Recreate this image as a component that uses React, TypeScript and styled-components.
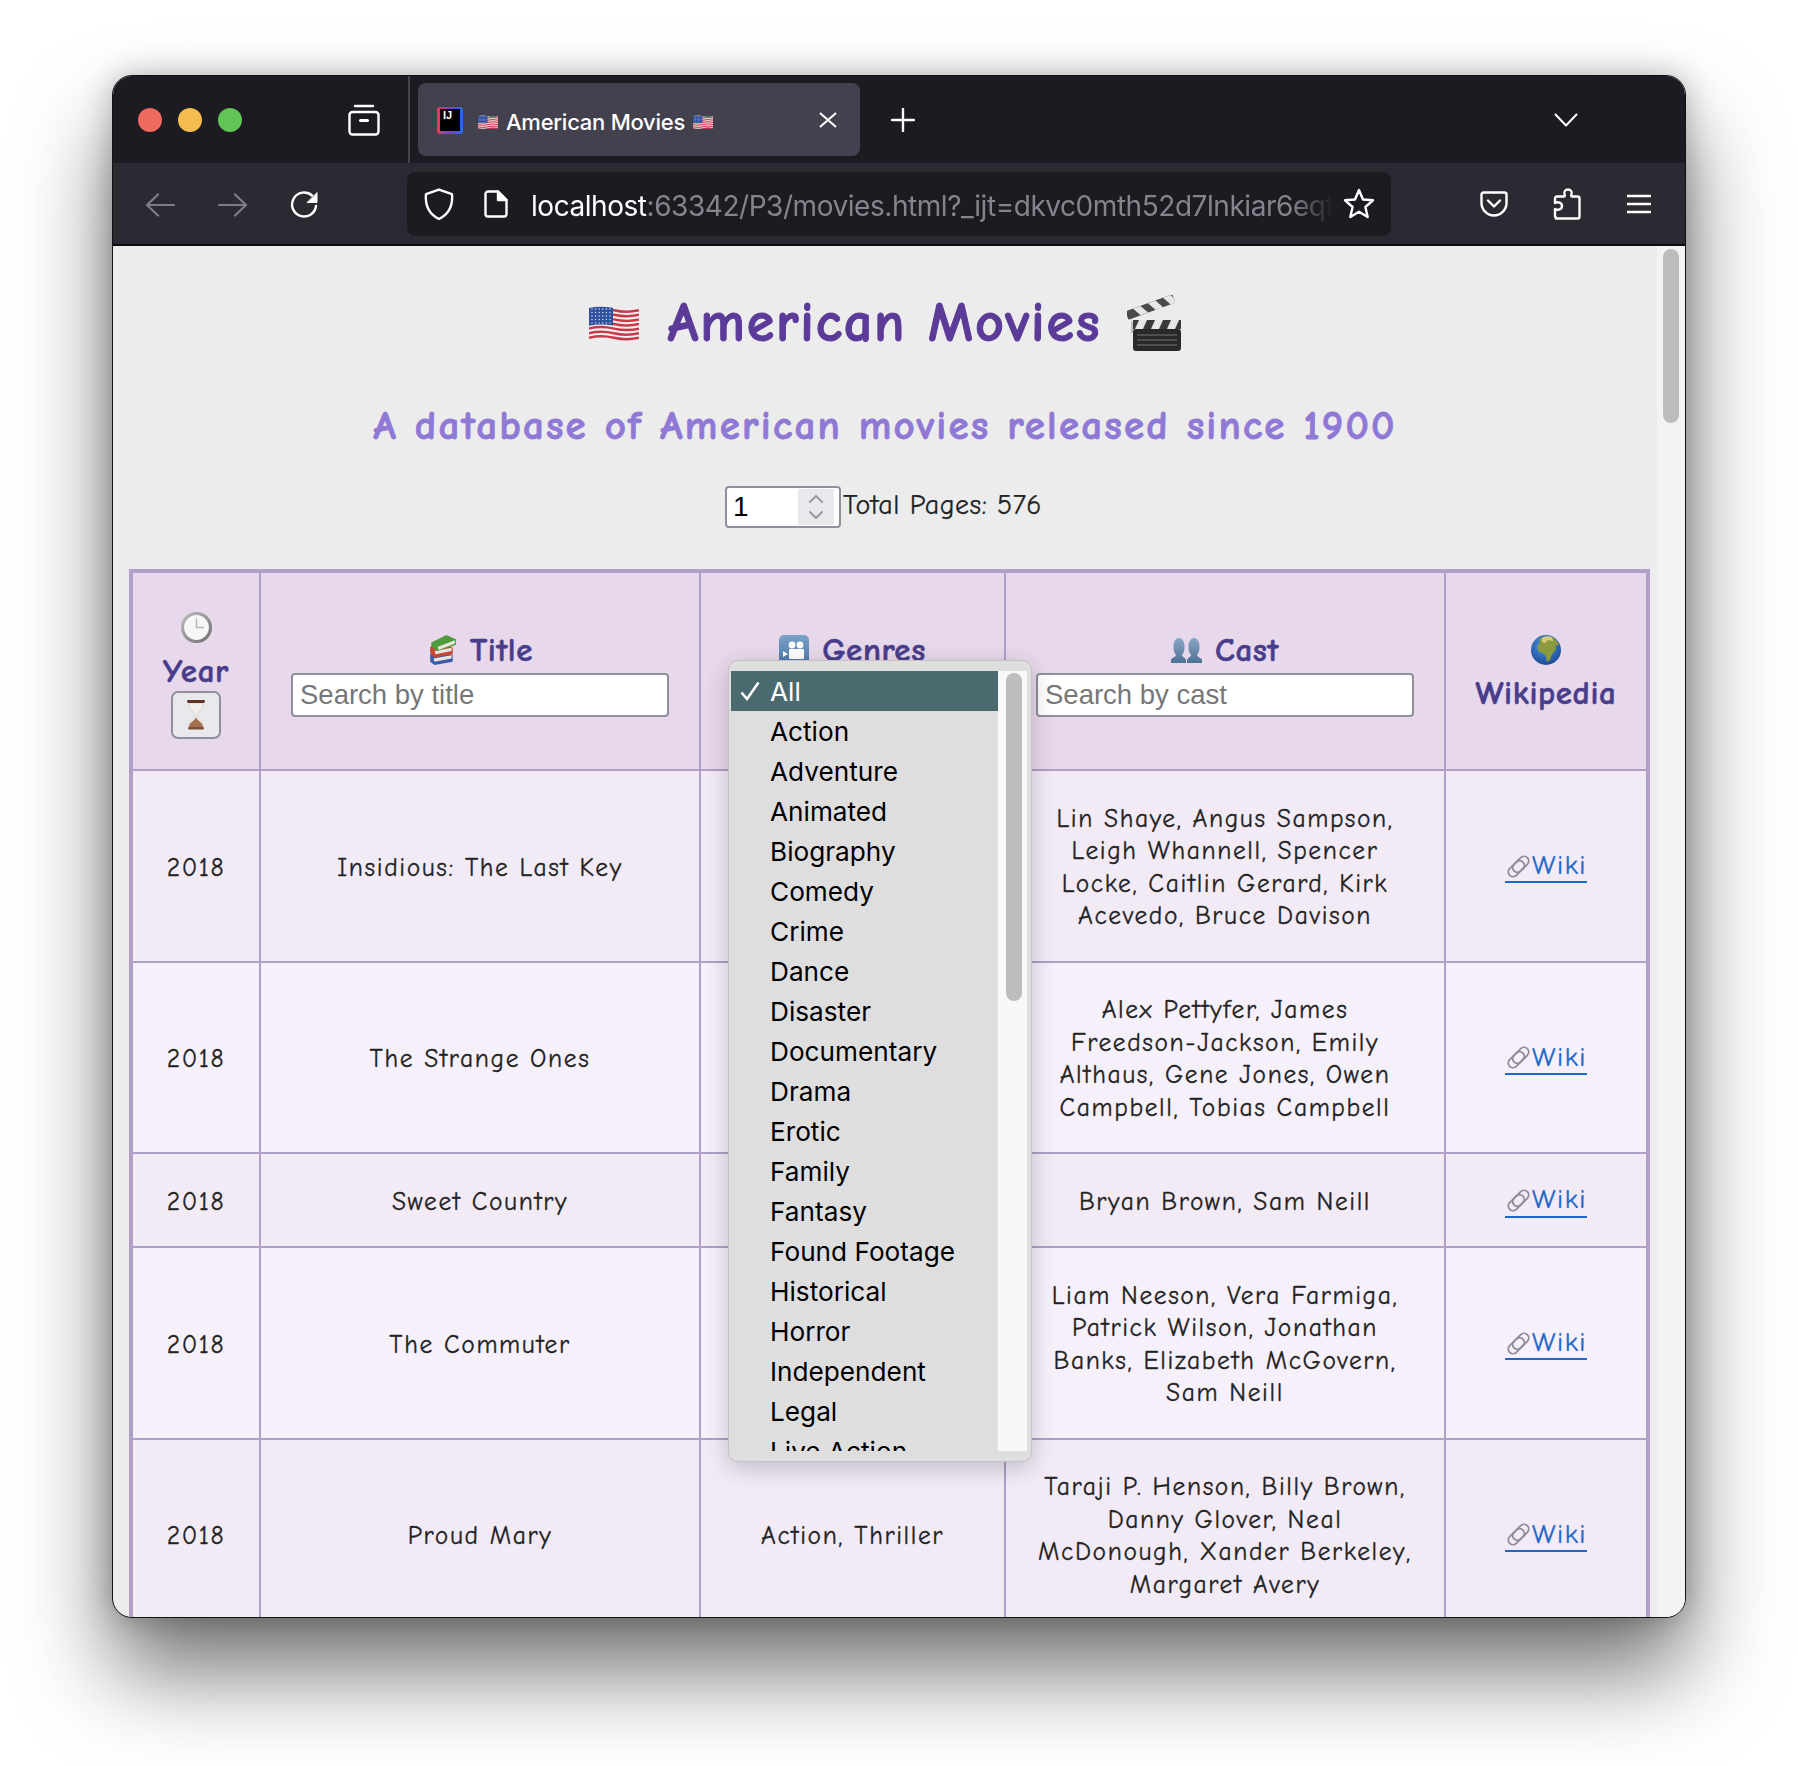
import React from 'react';
import styled, { createGlobalStyle } from 'styled-components';

const GlobalStyle = createGlobalStyle`
  html, body { margin: 0; padding: 0; background: #fff; }
  body { width: 1798px; height: 1766px; overflow: hidden; }
`;

const comic = `"Comic Sans MS", "Comic Neue", "Noto Sans", sans-serif`;
const ui = `Inter, "Liberation Sans", sans-serif`;
const helvetica = `"Liberation Sans", Arial, sans-serif`;

const Page = styled.div`
  padding: 75px 112px 0;
`;

const Window = styled.div`
  width: 1574px;
  height: 1543px;
  display: flex;
  flex-direction: column;
  box-sizing: border-box;
  border-radius: 20px;
  border: 1px solid #111;
  overflow: hidden;
  box-shadow: 0 54px 90px rgba(0, 0, 0, 0.55), 0 0 30px rgba(0, 0, 0, 0.25);
  background: #ececec;
`;

const TitleBar = styled.div`
  height: 87px;
  flex: none;
  display: flex;
  align-items: center;
  background: #1c1b22;
  color: #fff;
`;

const Lights = styled.div`
  display: flex;
  gap: 16px;
  margin-left: 25px;
`;

const Light = styled.span<{ $color: string }>`
  width: 24px;
  height: 24px;
  border-radius: 50%;
  background: ${p => p.$color};
`;

const TabsButton = styled.span`
  display: flex;
  margin-left: 106px;
`;

const BarDivider = styled.span`
  width: 2px;
  align-self: stretch;
  background: #45444d;
  margin-left: 28px;
`;

const Tab = styled.div`
  width: 442px;
  height: 73px;
  margin-left: 8px;
  border-radius: 8px;
  background: #42414d;
  display: flex;
  align-items: center;
  box-sizing: border-box;
  padding: 5px 0 0 19px;
  font: 500 22px ${ui};
`;

const TabTitle = styled.span`
  margin: 0 8px;
  letter-spacing: -0.25px;
`;

const Favicon = styled.span`
  width: 26px;
  height: 27px;
  margin-right: 15px;
  margin-top: -4px;
  border-radius: 3px;
  background: linear-gradient(90deg, #f0394f 0%, #7c3bd6 50%, #1f6fe8 100%);
  display: flex;
  align-items: center;
  justify-content: center;
`;

const FaviconInner = styled.span`
  width: 20px;
  height: 22px;
  background: #000;
  color: #fff;
  font: 700 11px/12px ${helvetica};
  padding-left: 3px;
  box-sizing: border-box;
`;

const CloseTab = styled.span`
  display: flex;
  margin-left: auto;
  margin-right: 23px;
  margin-top: -5px;
`;

const NewTab = styled.span`
  display: flex;
  margin-left: 31px;
`;

const Chevron = styled.span`
  display: flex;
  margin-left: auto;
  margin-right: 107px;
`;

const Toolbar = styled.div`
  height: 83px;
  flex: none;
  display: flex;
  align-items: center;
  background: #2b2a33;
  border-bottom: 2px solid #0c0c0d;
  box-sizing: border-box;
`;

const ToolIcon = styled.span<{ $left: number; $top?: number }>`
  display: flex;
  margin-left: ${p => p.$left}px;
  margin-top: ${p => p.$top ?? 0}px;
`;

const UrlBar = styled.div`
  width: 984px;
  height: 64px;
  margin-left: 89px;
  display: flex;
  align-items: center;
  box-sizing: border-box;
  padding: 0 16px 0 17px;
  border-radius: 8px;
  background: #1c1b22;
`;

const UrlText = styled.div`
  width: 803px;
  margin-left: 23px;
  margin-right: 10px;
  padding-top: 4px;
  overflow: hidden;
  white-space: nowrap;
  font: 400 28px ${ui};
  letter-spacing: -0.45px;
  color: #fff;
  -webkit-mask-image: linear-gradient(to right, #000 95%, transparent 100%);
  mask-image: linear-gradient(to right, #000 95%, transparent 100%);
`;

const UrlRest = styled.span`
  color: #85848d;
`;

const Content = styled.div`
  flex: 1;
  min-height: 0;
  display: flex;
`;

const Main = styled.main`
  flex: 1;
  min-width: 0;
  overflow: hidden;
  font-family: ${comic};
`;

const ScrollTrack = styled.div`
  width: 28px;
  flex: none;
  background: #f3f3f3;
  padding: 3px 6px;
  box-sizing: border-box;
`;

const ScrollThumb = styled.div`
  height: 174px;
  border-radius: 8px;
  background: #bcbcbc;
`;

const Heading = styled.h1`
  margin: 45px 0 0;
  display: flex;
  justify-content: center;
  align-items: center;
  gap: 26px;
  height: 64px;
  font: 700 56px/64px ${comic};
  letter-spacing: 1.8px;
  -webkit-text-stroke: 1px #5b3a98;
  color: #5b3a98;
`;

const HeadingText = styled.span`
  margin-left: 3px;
`;

const Subheading = styled.h2`
  margin: 45px 0 0;
  height: 52px;
  text-align: center;
  font: 700 41px/52px ${comic};
  letter-spacing: 2.2px;
  -webkit-text-stroke: 0.8px #8f78d6;
  color: #8f78d6;
`;

const Pager = styled.div`
  margin: 34px 0 0;
  height: 42px;
  display: flex;
  justify-content: center;
  align-items: center;
  gap: 2px;
  font-size: 28px;
  color: #222;
  -webkit-text-stroke: 0.25px #222;
`;

const PageNumber = styled.div`
  width: 116px;
  height: 42px;
  margin-left: -3px;
  box-sizing: border-box;
  border: 2px solid #8f8f9d;
  border-radius: 4px;
  background: #fff;
  display: flex;
  align-items: center;
  justify-content: space-between;
  padding: 1px 5px 1px 6px;
  font: 400 28px ${helvetica};
  color: #000;
  -webkit-text-stroke: 0;
`;

const Spinner = styled.span`
  width: 36px;
  height: 100%;
  background: #e9e9ed;
  display: flex;
  align-items: center;
  justify-content: center;
`;

const PagerLabel = styled.span`
  margin-top: -4px;
  letter-spacing: 0.5px;
`;

const Table = styled.table`
  margin: 41px 0 0 16px;
  width: 1521px;
  table-layout: fixed;
  border-collapse: collapse;
  border: 4px solid #b09fc6;
  color: #222;
`;

const HeadCell = styled.th`
  height: 194px;
  padding: 2px 0 0;
  border: 2px solid #b09fc6;
  background: #e8d8eb;
  color: #483d8b;
  font: 700 33px/38px ${comic};
  letter-spacing: 0.6px;
  -webkit-text-stroke: 0.5px #483d8b;
  text-align: center;
  vertical-align: middle;
  position: relative;
`;

const HeadLabel = styled.div`
  display: flex;
  justify-content: center;
  align-items: center;
  gap: 13px;
  height: 46px;
`;

const StackedLabel = styled.div<{ $shift: number }>`
  display: flex;
  flex-direction: column;
  align-items: center;
  gap: 6px;
  padding-top: ${p => p.$shift}px;
  line-height: 44px;
`;

const StackedText = styled.span`
  margin-bottom: -8px;
`;

const SearchInput = styled.input`
  display: block;
  width: 378px;
  height: 44px;
  margin: 0 auto;
  box-sizing: border-box;
  border: 2px solid #8f8f9d;
  border-radius: 4px;
  background: #fff;
  padding: 0 7px;
  font: 400 27.5px ${helvetica};
  letter-spacing: 0;
  -webkit-text-stroke: 0;
  &::placeholder {
    color: #777;
    opacity: 1;
  }
`;

const SelectSpace = styled.div`
  height: 44px;
`;

const SortButton = styled.button`
  width: 50px;
  height: 48px;
  padding: 0;
  box-sizing: border-box;
  border: 2px solid #8f8f9d;
  border-radius: 7px;
  background: #e9e9ed;
  display: flex;
  align-items: center;
  justify-content: center;
`;

const Row = styled.tr<{ $light?: boolean }>`
  background: ${p => (p.$light ? '#f6f0fa' : '#f2eaf5')};
`;

const Cell = styled.td<{ $tall?: boolean }>`
  height: ${p => (p.$tall ? 185.5 : 88)}px;
  padding: 4px 0 0;
  border: 2px solid #b09fc6;
  text-align: center;
  vertical-align: middle;
  font: 400 25.5px/32.5px ${comic};
  letter-spacing: 1.6px;
  -webkit-text-stroke: 0.3px #222;
  color: #222;
`;

const CastLine = styled.div`
  white-space: nowrap;
`;

const WikiLink = styled.a`
  display: inline-flex;
  align-items: center;
  height: 30px;
  margin-top: 4px;
  color: #1f67c9;
  text-decoration: none;
  -webkit-text-stroke: 0.3px #1f67c9;
  border-bottom: 2px solid #1f67c9;
  font-size: 27px;
`;

const Dropdown = styled.div`
  position: absolute;
  left: 27px;
  top: 87px;
  z-index: 5;
  width: 304px;
  height: 802px;
  box-sizing: border-box;
  display: flex;
  padding: 10px 4px 10px 2px;
  border-radius: 10px;
  border: 1px solid #c4c0c6;
  background: #dedede;
  box-shadow: 0 6px 24px rgba(0, 0, 0, 0.2);
  -webkit-text-stroke: 0;
`;

const DropdownList = styled.div`
  flex: 1;
  min-width: 0;
  overflow: hidden;
`;

const DropdownItem = styled.div<{ $selected?: boolean }>`
  height: 40px;
  flex: none;
  display: flex;
  align-items: center;
  padding-left: 39px;
  position: relative;
  font: 400 26.2px ${ui};
  letter-spacing: 0;
  color: ${p => (p.$selected ? '#fff' : '#000')};
  background: ${p => (p.$selected ? '#4b6a70' : 'transparent')};
`;

const CheckMark = styled.span`
  position: absolute;
  left: 9px;
  top: 10px;
  display: flex;
`;

const DropdownTrack = styled.div`
  width: 29px;
  flex: none;
  background: #f8f8f8;
  padding: 2px 5px 0 8px;
  box-sizing: border-box;
`;

const DropdownThumb = styled.div`
  height: 328px;
  border-radius: 8px;
  background: #bdbdbd;
`;

const Flag = ({ w }: { w: number }) => {
  const stripes = [0, 1, 2, 3, 4, 5, 6];
  const dots: [number, number][] = [];
  for (let r = 0; r < 5; r++) for (let c = 0; c < 6; c++) dots.push([3 + c * 3.6, 4 + r * 3.5]);
  return (
    <svg width={w} height={(w * 36) / 50} viewBox="0 0 50 36">
      <path d="M0 3Q12 0 25 3T50 3V33Q38 30 25 33T0 33Z" fill="#f4f1f1" />
      {stripes.map(i => (
        <path
          key={i}
          d={`M0 ${5.2 + i * 4.6}Q12 ${2.2 + i * 4.6} 25 ${5.2 + i * 4.6}T50 ${5.2 + i * 4.6}`}
          fill="none"
          stroke="#c8394a"
          strokeWidth="2.5"
        />
      ))}
      <path d="M0 3Q11 0.6 24 2.8V20.5Q11 18.5 0 20.8Z" fill="#2f4f9f" />
      {dots.map(([x, y]) => (
        <circle key={`${x}-${y}`} cx={x} cy={y} r="0.7" fill="#dfe6f5" />
      ))}
    </svg>
  );
};

const Clapper = () => (
  <svg width="54" height="56" viewBox="0 0 54 56">
    <g transform="rotate(-20 4 26)">
      <rect x="2" y="15" width="50" height="9" rx="1" fill="#4a4a4c" />
      <path d="M10 15h8l5 9h-8zM26 15h8l5 9h-8zM42 15h8l2 4v5h-5z" fill="#e6e6e6" />
    </g>
    <path d="M4 25l8 13h-8z" fill="#bdbdbd" />
    <rect x="6" y="25" width="48" height="9" fill="#3a3a3c" />
    <path d="M12 25h8l-4 9h-8zM28 25h8l-4 9h-8zM44 25h8l-4 9h-8z" fill="#e6e6e6" />
    <rect x="6" y="34" width="48" height="22" rx="3" fill="#29292b" />
    <path d="M10 40h40M10 45h40M10 50h40" stroke="#77777a" strokeWidth="1" />
  </svg>
);

const Clock = () => (
  <svg width="31" height="31" viewBox="0 0 30 30">
    <defs>
      <linearGradient id="clockRim" x1="0" y1="0" x2="1" y2="1">
        <stop offset="0" stopColor="#bdbdbd" />
        <stop offset="1" stopColor="#6d6d6d" />
      </linearGradient>
    </defs>
    <circle cx="15" cy="15" r="15" fill="url(#clockRim)" />
    <circle cx="15" cy="15" r="12" fill="#f7f7f7" />
    <path d="M15 6v9h7" fill="none" stroke="#b5b5b5" strokeWidth="1.4" />
  </svg>
);

const Hourglass = () => (
  <svg width="20" height="30" viewBox="0 0 20 30">
    <path d="M3 3h14c0 6-5 9-6 12 1 3 6 6 6 12H3c0-6 5-9 6-12-1-3-6-6-6-12z" fill="#f3efec" stroke="#cfc9c4" strokeWidth=".6" />
    <path d="M10 17c-1 4-7 5-7 10h14c0-5-6-6-7-10z" fill="#a2704f" />
    <rect x="1" y="0" width="18" height="3" rx="1.4" fill="#5f3522" />
    <rect x="2" y="27" width="16" height="2.500" rx="1.200" fill="#7c5038" />
  </svg>
);

const Books = () => (
  <svg width="30" height="30" viewBox="0 0 28 28">
    <path d="M3 18l17-2 4 3v6l-17 3-4-3z" fill="#3d5aa8" />
    <path d="M6 22l17-3v3L7 25z" fill="#e9e6dd" />
    <path d="M3 11l16-2 5 3v6L7 21l-4-4z" fill="#c8452f" />
    <path d="M7 15l16-3v3L8 18z" fill="#e9e6dd" />
    <path d="M4 7l14-7 9 4v5L10 15 4 11z" fill="#4f9b3d" />
    <path d="M10 11l16-6v3L11 14z" fill="#e9e6dd" />
  </svg>
);

const Cinema = () => (
  <svg width="30" height="30" viewBox="0 0 30 30">
    <defs>
      <linearGradient id="cinemaBg" x1="0" y1="0" x2="0" y2="1">
        <stop offset="0" stopColor="#7ba3c9" />
        <stop offset="1" stopColor="#4a76a6" />
      </linearGradient>
    </defs>
    <rect width="30" height="30" rx="5" fill="url(#cinemaBg)" />
    <circle cx="13" cy="10" r="3.4" fill="#fff" />
    <circle cx="21" cy="10" r="3.4" fill="#fff" />
    <rect x="10" y="14" width="15" height="10" rx="1" fill="#fff" />
    <path d="M4 16l5 3-5 3z" fill="#fff" />
  </svg>
);

const People = () => (
  <svg width="31" height="26" viewBox="0 0 31 26">
    <defs>
      <linearGradient id="peopleFill" x1="0" y1="0" x2="0" y2="1">
        <stop offset="0" stopColor="#8aa6c7" />
        <stop offset="1" stopColor="#4d7294" />
      </linearGradient>
    </defs>
    <path d="M0 26v-3c0-2 5-3 5-5-2-2-2.500-5-2.500-8.500C2.500 4 5 1 8 1s5.500 3 5.500 8.500c0 3.500-.5 6.500-2.500 8.500 0 2 4 3 4 5v3z" fill="url(#peopleFill)" />
    <path d="M16 26v-3c0-2 4-3 4-5-2-2-2.500-5-2.500-8.500C17.500 4 20 1 23 1s5.500 3 5.500 8.500c0 3.500-.5 6.500-2.500 8.500 0 2 5 3 5 5v3z" fill="url(#peopleFill)" />
  </svg>
);

const Globe = () => (
  <svg width="30" height="30" viewBox="0 0 30 30">
    <defs>
      <radialGradient id="globeSea" cx=".45" cy=".35" r=".75">
        <stop offset="0" stopColor="#4f9be0" />
        <stop offset="1" stopColor="#153f8f" />
      </radialGradient>
    </defs>
    <circle cx="15" cy="15" r="15" fill="url(#globeSea)" />
    <path d="M8 4c4-3 9-3 13-2 3 1 6 5 7 8l-4 1 1 4-4 4-2 6-3 2-1-6-3-3-4-1-2-5 3-5z" fill="#8c9a3f" />
    <path d="M11 3c3-2 7-2 10-1l1 4-5-1-3 3-3-1z" fill="#d8c980" />
  </svg>
);

const ChainLink = () => (
  <svg width="27" height="27" viewBox="0 0 26 26" fill="none" stroke="#8d8d93" strokeWidth="1.800">
    <rect x="-3.500" y="-4.500" width="18" height="9" rx="4.500" transform="translate(7 19) rotate(-45)" />
    <rect x="-14.500" y="-4.500" width="18" height="9" rx="4.500" transform="translate(19 7) rotate(-45)" />
  </svg>
);

const iconStroke = { fill: 'none', stroke: '#fff', strokeWidth: 2.4, strokeLinecap: 'round', strokeLinejoin: 'round' } as const;

const TabsIcon = () => (
  <svg width="32" height="32" viewBox="0 0 32 32" {...iconStroke}>
    <path d="M7 2h18" />
    <rect x="1.500" y="8" width="29" height="22.500" rx="3" />
    <path d="M12.500 16.500h7" strokeWidth="3" />
  </svg>
);

const CloseIcon = () => (
  <svg width="18" height="16" viewBox="0 0 18 16" fill="none" stroke="#fff" strokeWidth="2">
    <path d="M1 1l16 14M17 1L1 15" />
  </svg>
);

const PlusIcon = () => (
  <svg width="24" height="24" viewBox="0 0 24 24" {...iconStroke}>
    <path d="M12 1v22M1 12h22" />
  </svg>
);

const ChevronIcon = () => (
  <svg width="24" height="14" viewBox="0 0 24 14" {...iconStroke} strokeWidth={2}>
    <path d="M1.500 1.500L12 12.500 22.500 1.500" />
  </svg>
);

const ArrowIcon = ({ flip }: { flip?: boolean }) => (
  <svg width="29" height="24" viewBox="0 0 29 24" fill="none" stroke="#7e7d85" strokeWidth="2.200" strokeLinecap="round" strokeLinejoin="round">
    <path d={flip ? 'M1 12h27M17 1.500L28 12 17 22.500' : 'M28 12H1M12 1.500L1 12l11 10.500'} />
  </svg>
);

const ReloadIcon = () => (
  <svg width="28" height="28" viewBox="0 0 28 28" {...iconStroke}>
    <path d="M26 15a12 12 0 1 1-4-10.500" />
    <path d="M27 2v9.500h-9.500z" fill="#fff" strokeWidth="1" />
  </svg>
);

const ShieldIcon = () => (
  <svg width="30" height="32" viewBox="0 0 30 32" {...iconStroke}>
    <path d="M15 1.500L28 6c1 11-3 20-13 25C5 26 1 17 2 6z" />
  </svg>
);

const PageIcon = () => (
  <svg width="24" height="28" viewBox="0 0 24 28" {...iconStroke}>
    <path d="M4 1.500h10l8.500 8.500v14a2.500 2.500 0 0 1-2.500 2.500H4A2.500 2.500 0 0 1 1.500 24V4A2.500 2.500 0 0 1 4 1.500z" />
    <path d="M14 1.500V10h8.500z" fill="#fff" />
  </svg>
);

const StarIcon = () => (
  <svg width="32" height="31" viewBox="0 0 32 31" {...iconStroke}>
    <path d="M16 2l4 9.500 10 .8-7.600 6.700 2.300 10L16 23.800 7.300 29l2.300-10L2 12.300l10-.8z" />
  </svg>
);

const PocketIcon = () => (
  <svg width="28" height="26" viewBox="0 0 28 26" {...iconStroke}>
    <path d="M3.500 1.500h21a2 2 0 0 1 2 2V12c0 7-6 12.500-12.500 12.500S1.500 19 1.500 12V3.500a2 2 0 0 1 2-2z" />
    <path d="M8 9.500l6 6 6-6" />
  </svg>
);

const PuzzleIcon = () => (
  <svg width="28" height="32" viewBox="0 0 28 32" {...iconStroke}>
    <path d="M3 30.500h21.500a2 2 0 0 0 2-2V10.500a2 2 0 0 0-2-2H19c-1 0-1-1-.5-2 1-3-1-5-3.500-5s-4.500 2-3.500 5c.5 1 .5 2-.5 2H4a2 2 0 0 0-2 2v4.500c3-1.500 7-.5 7 3s-4 4.500-7 3v7.500a1 1 0 0 0 1 1z" />
  </svg>
);

const MenuIcon = () => (
  <svg width="24" height="20" viewBox="0 0 24 20" {...iconStroke} strokeLinecap="butt">
    <path d="M0 2h24M0 10h24M0 18h24" />
  </svg>
);

const SpinIcon = () => (
  <svg width="16" height="30" viewBox="0 0 16 30" fill="none" stroke="#9a9aa5" strokeWidth="2" strokeLinecap="round">
    <path d="M2 10l6-6 6 6M2 20l6 6 6-6" />
  </svg>
);

const CheckIcon = () => (
  <svg width="20" height="20" viewBox="0 0 20 20" fill="none" stroke="#fff" strokeWidth="2.500">
    <path d="M1.500 11.500L7 18 18.500 1.500" />
  </svg>
);

const genres = [
  'All', 'Action', 'Adventure', 'Animated', 'Biography', 'Comedy', 'Crime', 'Dance', 'Disaster', 'Documentary',
  'Drama', 'Erotic', 'Family', 'Fantasy', 'Found Footage', 'Historical', 'Horror', 'Independent', 'Legal', 'Live Action',
];

const movies = [
  {
    title: 'Insidious: The Last Key',
    genres: '',
    cast: ['Lin Shaye, Angus Sampson,', 'Leigh Whannell, Spencer', 'Locke, Caitlin Gerard, Kirk', 'Acevedo, Bruce Davison'],
  },
  {
    title: 'The Strange Ones',
    genres: '',
    cast: ['Alex Pettyfer, James', 'Freedson-Jackson, Emily', 'Althaus, Gene Jones, Owen', 'Campbell, Tobias Campbell'],
  },
  { title: 'Sweet Country', genres: '', cast: ['Bryan Brown, Sam Neill'] },
  {
    title: 'The Commuter',
    genres: '',
    cast: ['Liam Neeson, Vera Farmiga,', 'Patrick Wilson, Jonathan', 'Banks, Elizabeth McGovern,', 'Sam Neill'],
  },
  {
    title: 'Proud Mary',
    genres: 'Action, Thriller',
    cast: ['Taraji P. Henson, Billy Brown,', 'Danny Glover, Neal', 'McDonough, Xander Berkeley,', 'Margaret Avery'],
  },
];

export default function App() {
  return (
    <>
      <GlobalStyle />
      <Page>
        <Window>
          <TitleBar>
            <Lights>
              <Light $color="#ee6a5f" />
              <Light $color="#f5bd4f" />
              <Light $color="#61c454" />
            </Lights>
            <TabsButton><TabsIcon /></TabsButton>
            <BarDivider />
            <Tab>
              <Favicon><FaviconInner>IJ</FaviconInner></Favicon>
              <Flag w={20} />
              <TabTitle>American Movies</TabTitle>
              <Flag w={20} />
              <CloseTab><CloseIcon /></CloseTab>
            </Tab>
            <NewTab><PlusIcon /></NewTab>
            <Chevron><ChevronIcon /></Chevron>
          </TitleBar>
          <Toolbar>
            <ToolIcon $left={33} $top={3}><ArrowIcon /></ToolIcon>
            <ToolIcon $left={43} $top={3}><ArrowIcon flip /></ToolIcon>
            <ToolIcon $left={43} $top={3}><ReloadIcon /></ToolIcon>
            <UrlBar>
              <ShieldIcon />
              <ToolIcon $left={30}><PageIcon /></ToolIcon>
              <UrlText>
                localhost<UrlRest>:63342/P3/movies.html?_ijt=dkvc0mth52d7lnkiar6eqt</UrlRest>
              </UrlText>
              <StarIcon />
            </UrlBar>
            <ToolIcon $left={89}><PocketIcon /></ToolIcon>
            <ToolIcon $left={45}><PuzzleIcon /></ToolIcon>
            <ToolIcon $left={46}><MenuIcon /></ToolIcon>
          </Toolbar>
          <Content>
            <Main>
              <Heading>
                <Flag w={50} />
                <HeadingText>American Movies</HeadingText>
                <Clapper />
              </Heading>
              <Subheading>A database of American movies released since 1900</Subheading>
              <Pager>
                <PageNumber>
                  1
                  <Spinner><SpinIcon /></Spinner>
                </PageNumber>
                <PagerLabel>Total Pages: 576</PagerLabel>
              </Pager>
              <Table>
                <colgroup>
                  <col style={{ width: 129 }} />
                  <col style={{ width: 440 }} />
                  <col style={{ width: 305 }} />
                  <col style={{ width: 440 }} />
                  <col />
                </colgroup>
                <thead>
                  <tr>
                    <HeadCell>
                      <StackedLabel $shift={6}>
                        <Clock />
                        <StackedText>Year</StackedText>
                        <SortButton><Hourglass /></SortButton>
                      </StackedLabel>
                    </HeadCell>
                    <HeadCell>
                      <HeadLabel><Books /> Title</HeadLabel>
                      <SearchInput placeholder="Search by title" readOnly />
                    </HeadCell>
                    <HeadCell>
                      <HeadLabel><Cinema /> Genres</HeadLabel>
                      <SelectSpace />
                      <Dropdown>
                        <DropdownList>
                          {genres.map((g, i) => (
                            <DropdownItem key={g} $selected={i === 0}>
                              {i === 0 && <CheckMark><CheckIcon /></CheckMark>}
                              {g}
                            </DropdownItem>
                          ))}
                        </DropdownList>
                        <DropdownTrack><DropdownThumb /></DropdownTrack>
                      </Dropdown>
                    </HeadCell>
                    <HeadCell>
                      <HeadLabel><People /> Cast</HeadLabel>
                      <SearchInput placeholder="Search by cast" readOnly />
                    </HeadCell>
                    <HeadCell>
                      <StackedLabel $shift={6}>
                        <Globe />
                        <span>Wikipedia</span>
                      </StackedLabel>
                    </HeadCell>
                  </tr>
                </thead>
                <tbody>
                  {movies.map((m, i) => (
                    <Row key={m.title} $light={i % 2 === 1}>
                      <Cell $tall={m.cast.length > 1}>2018</Cell>
                      <Cell>{m.title}</Cell>
                      <Cell>{m.genres}</Cell>
                      <Cell>
                        {m.cast.map(line => <CastLine key={line}>{line}</CastLine>)}
                      </Cell>
                      <Cell>
                        <WikiLink href="#"><ChainLink />Wiki</WikiLink>
                      </Cell>
                    </Row>
                  ))}
                </tbody>
              </Table>
            </Main>
            <ScrollTrack><ScrollThumb /></ScrollTrack>
          </Content>
        </Window>
      </Page>
    </>
  );
}
